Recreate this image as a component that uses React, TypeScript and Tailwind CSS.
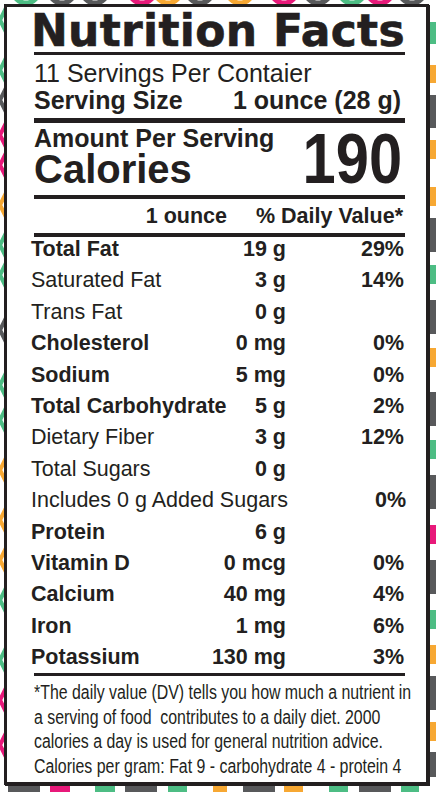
import React from "react";

type Nutrient = {
  name: string;
  bold?: boolean;
  amount?: string;
  dv?: string;
};

const nutrients: Nutrient[] = [
  { name: "Total Fat", bold: true, amount: "19 g", dv: "29%" },
  { name: "Saturated Fat", amount: "3 g", dv: "14%" },
  { name: "Trans Fat", amount: "0 g" },
  { name: "Cholesterol", bold: true, amount: "0 mg", dv: "0%" },
  { name: "Sodium", bold: true, amount: "5 mg", dv: "0%" },
  { name: "Total Carbohydrate", bold: true, amount: "5 g", dv: "2%" },
  { name: "Dietary Fiber", amount: "3 g", dv: "12%" },
  { name: "Total Sugars", amount: "0 g" },
  { name: "Includes 0 g Added Sugars", dv: "0%" },
  { name: "Protein", bold: true, amount: "6 g" },
  { name: "Vitamin D", bold: true, amount: "0 mcg", dv: "0%" },
  { name: "Calcium", bold: true, amount: "40 mg", dv: "4%" },
  { name: "Iron", bold: true, amount: "1 mg", dv: "6%" },
  { name: "Potassium", bold: true, amount: "130 mg", dv: "3%" },
];

const footnote = [
  "*The daily value (DV) tells you how much a nutrient in",
  "a serving of food  contributes to a daily diet. 2000",
  "calories a day is used for general nutrition advice.",
  "Calories per gram: Fat 9 - carbohydrate 4 - protein 4",
];

const GRAY = "#58595b";
const GREEN = "#4dbd84";
const PINK = "#e8197a";
const ORANGE = "#f7a833";

// colour runs peeking out round the label edges
const topArcs = [
  { x: 26, c: GREEN },
  { x: 62, c: GRAY },
  { x: 95, c: GRAY },
  { x: 142, c: PINK },
  { x: 168, c: ORANGE },
  { x: 200, c: GRAY },
  { x: 240, c: ORANGE },
  { x: 284, c: PINK },
  { x: 318, c: GRAY },
  { x: 352, c: GREEN },
  { x: 380, c: PINK },
  { x: 412, c: GRAY },
];

const leftMarks = [
  { y: 20, c: GREEN },
  { y: 70, c: GREEN },
  { y: 100, c: GRAY },
  { y: 135, c: PINK },
  { y: 165, c: PINK },
  { y: 205, c: ORANGE },
  { y: 245, c: GREEN },
  { y: 275, c: GREEN },
  { y: 330, c: GRAY },
  { y: 385, c: GREEN },
  { y: 420, c: GREEN },
  { y: 470, c: ORANGE },
  { y: 520, c: ORANGE },
  { y: 560, c: ORANGE },
  { y: 600, c: GREEN },
  { y: 660, c: GREEN },
  { y: 700, c: PINK },
  { y: 745, c: PINK },
];

const rightDashes = [
  { y: 22, h: 22, c: GREEN },
  { y: 65, h: 18, c: ORANGE },
  { y: 95, h: 33, c: GRAY },
  { y: 140, h: 19, c: ORANGE },
  { y: 187, h: 19, c: ORANGE },
  { y: 218, h: 34, c: GRAY },
  { y: 265, h: 19, c: GREEN },
  { y: 300, h: 34, c: GRAY },
  { y: 348, h: 19, c: ORANGE },
  { y: 392, h: 34, c: GRAY },
  { y: 440, h: 19, c: GREEN },
  { y: 475, h: 34, c: GRAY },
  { y: 525, h: 19, c: PINK },
  { y: 560, h: 34, c: GRAY },
  { y: 610, h: 19, c: GREEN },
  { y: 645, h: 19, c: ORANGE },
  { y: 676, h: 34, c: GRAY },
  { y: 722, h: 19, c: ORANGE },
  { y: 752, h: 25, c: GRAY },
];

const bottomDashes = [
  { x: 8, w: 32, c: GRAY },
  { x: 50, w: 20, c: PINK },
  { x: 95, w: 20, c: GREEN },
  { x: 125, w: 32, c: GRAY },
  { x: 168, w: 19, c: GREEN },
  { x: 213, w: 14, c: ORANGE },
  { x: 243, w: 32, c: GRAY },
  { x: 284, w: 19, c: ORANGE },
  { x: 329, w: 19, c: GREEN },
  { x: 359, w: 32, c: GRAY },
  { x: 401, w: 18, c: GREEN },
];

function EdgePattern() {
  return (
    <svg
      className="absolute inset-0 h-full w-full"
      viewBox="0 0 436 792"
      preserveAspectRatio="none"
    >
      {topArcs.map((a) => (
        <circle
          key={a.x}
          cx={a.x}
          cy={-10}
          r={13}
          fill="none"
          stroke={a.c}
          strokeWidth={5}
        />
      ))}
      {leftMarks.map((m) => (
        <path
          key={m.y}
          d={`M6 ${m.y - 12} L0 ${m.y} L6 ${m.y + 12}`}
          fill="none"
          stroke={m.c}
          strokeWidth={4}
        />
      ))}
      {rightDashes.map((d) => (
        <rect key={d.y} x={430} y={d.y} width={6} height={d.h} fill={d.c} />
      ))}
      {bottomDashes.map((d) => (
        <rect key={d.x} x={d.x} y={786} width={d.w} height={6} fill={d.c} />
      ))}
    </svg>
  );
}

function Rule({ className }: { className: string }) {
  return <div className={`bg-[#231f20] ${className}`} />;
}

export default function App() {
  return (
    <div className="relative h-[792px] w-[436px] overflow-hidden bg-white font-['Liberation_Sans',Arial,sans-serif] text-[#231f20]">
      <EdgePattern />

      <div className="relative ml-[4px] mt-[4px] h-[781px] w-[425px] border-[3px] border-[#231f20] bg-white pl-[27px] pr-[21px] pt-[4px] shadow-[1px_1px_0_#231f20]">
        <h1 className="-ml-[3px] whitespace-nowrap font-['DejaVu_Sans',sans-serif] text-[44px] font-bold leading-[40px] tracking-[0.3px] [-webkit-text-stroke:0.6px_#231f20]">
          Nutrition Facts
        </h1>
        <Rule className="mt-[1px] h-[3px]" />

        <p className="mt-[5px] text-[25px] leading-[27px]">11 Servings Per Contaier</p>
        <div className="flex justify-between pr-[4px] text-[25px] font-bold leading-[27px]">
          <span>Serving Size</span>
          <span>1 ounce (28 g)</span>
        </div>
        <Rule className="mt-[4px] h-[5px]" />

        <div className="mt-[2px] flex items-end justify-between">
          <div className="flex flex-col font-bold">
            <span className="text-[25px] leading-[27px]">Amount Per Serving</span>
            <span className="text-[40px] leading-[34px]">Calories</span>
          </div>
          <span className="inline-block origin-right scale-x-[0.84] pr-[4px] text-[71px] font-bold leading-[55px]">
            190
          </span>
        </div>
        <Rule className="mt-[9px] h-[4px]" />

        <div className="mt-[5px] flex justify-end gap-[29px] pr-[2px] text-[21.5px] font-bold leading-[24px]">
          <span>1 ounce</span>
          <span>% Daily Value*</span>
        </div>
        <Rule className="mt-[5px] h-[4px]" />

        <div className="-ml-[3px] mr-[1px] flex flex-col gap-[7.4px] text-[21.5px] leading-[24px]">
          {nutrients.map((n) => (
            <div key={n.name} className="grid grid-cols-[1fr_118px]">
              <div className="flex justify-between whitespace-nowrap">
                <span className={n.bold ? "font-bold" : ""}>{n.name}</span>
                {n.amount && <span className="font-bold">{n.amount}</span>}
              </div>
              <span className="text-right font-bold">{n.dv}</span>
            </div>
          ))}
        </div>
        <Rule className="mt-[4px] h-[3px]" />

        {/* condensed footnote: no narrow face installed, so squeeze each line */}
        <div className="mt-[4px] flex flex-col text-[19.5px] leading-[24.67px]">
          {footnote.map((line) => (
            <span
              key={line}
              className="block origin-left scale-x-[0.815] whitespace-pre"
            >
              {line}
            </span>
          ))}
        </div>
      </div>
    </div>
  );
}
